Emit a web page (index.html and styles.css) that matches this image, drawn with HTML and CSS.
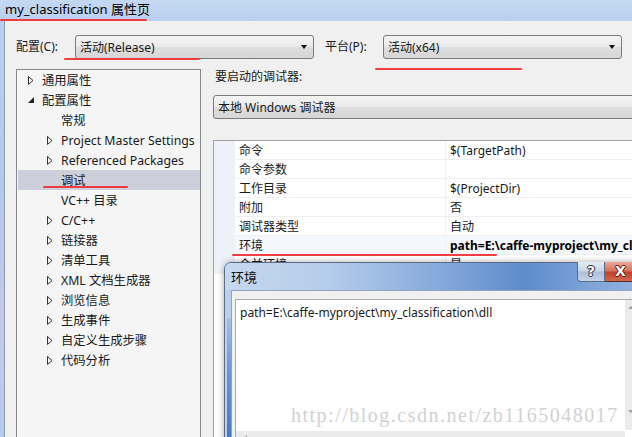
FILE: index.html
```html
<!DOCTYPE html>
<html>
<head>
<meta charset="utf-8">
<link rel="stylesheet" href="styles.css">
</head>
<body>
<div class="titlebar">my_classification 属性页</div>
<div class="bodyrow">
  <div class="side"></div>
  <div class="client">
    <div class="cfgrow">
      <span class="lbl lbl1">配置(C):</span>
      <div class="combo combo-sm"><span>活动(Release)</span><i class="drop"></i></div>
      <span class="lbl lbl2">平台(P):</span>
      <div class="combo combo-sm"><span>活动(x64)</span><i class="drop"></i></div>
    </div>
    <div class="main">
      <div class="tree">
        <div class="row l1"><span class="arr"><svg width="6" height="9" viewBox="0 0 6 9"><path d="M0.5 0.5 L5 4.5 L0.5 8.5 Z" fill="none" stroke="#333" stroke-width="1"/></svg></span>通用属性</div>
        <div class="row l1"><span class="arr"><svg width="6" height="6" viewBox="0 0 6 6"><path d="M6 0 L6 6 L0 6 Z" fill="#222"/></svg></span>配置属性</div>
        <div class="row l2"><span class="arr"></span>常规</div>
        <div class="row l2"><span class="arr"><svg width="6" height="9" viewBox="0 0 6 9"><path d="M0.5 0.5 L5 4.5 L0.5 8.5 Z" fill="none" stroke="#333" stroke-width="1"/></svg></span>Project Master Settings</div>
        <div class="row l2"><span class="arr"><svg width="6" height="9" viewBox="0 0 6 9"><path d="M0.5 0.5 L5 4.5 L0.5 8.5 Z" fill="none" stroke="#333" stroke-width="1"/></svg></span>Referenced Packages</div>
        <div class="row l2 sel"><span class="arr"></span>调试</div>
        <div class="row l2"><span class="arr"></span>VC++ 目录</div>
        <div class="row l2"><span class="arr"><svg width="6" height="9" viewBox="0 0 6 9"><path d="M0.5 0.5 L5 4.5 L0.5 8.5 Z" fill="none" stroke="#333" stroke-width="1"/></svg></span>C/C++</div>
        <div class="row l2"><span class="arr"><svg width="6" height="9" viewBox="0 0 6 9"><path d="M0.5 0.5 L5 4.5 L0.5 8.5 Z" fill="none" stroke="#333" stroke-width="1"/></svg></span>链接器</div>
        <div class="row l2"><span class="arr"><svg width="6" height="9" viewBox="0 0 6 9"><path d="M0.5 0.5 L5 4.5 L0.5 8.5 Z" fill="none" stroke="#333" stroke-width="1"/></svg></span>清单工具</div>
        <div class="row l2"><span class="arr"><svg width="6" height="9" viewBox="0 0 6 9"><path d="M0.5 0.5 L5 4.5 L0.5 8.5 Z" fill="none" stroke="#333" stroke-width="1"/></svg></span>XML 文档生成器</div>
        <div class="row l2"><span class="arr"><svg width="6" height="9" viewBox="0 0 6 9"><path d="M0.5 0.5 L5 4.5 L0.5 8.5 Z" fill="none" stroke="#333" stroke-width="1"/></svg></span>浏览信息</div>
        <div class="row l2"><span class="arr"><svg width="6" height="9" viewBox="0 0 6 9"><path d="M0.5 0.5 L5 4.5 L0.5 8.5 Z" fill="none" stroke="#333" stroke-width="1"/></svg></span>生成事件</div>
        <div class="row l2"><span class="arr"><svg width="6" height="9" viewBox="0 0 6 9"><path d="M0.5 0.5 L5 4.5 L0.5 8.5 Z" fill="none" stroke="#333" stroke-width="1"/></svg></span>自定义生成步骤</div>
        <div class="row l2"><span class="arr"><svg width="6" height="9" viewBox="0 0 6 9"><path d="M0.5 0.5 L5 4.5 L0.5 8.5 Z" fill="none" stroke="#333" stroke-width="1"/></svg></span>代码分析</div>
      </div>
      <div class="right">
        <div class="dbglabel">要启动的调试器:</div>
        <div class="combo combo-wide"><span>本地 Windows 调试器</span></div>
        <div class="grid">
          <div class="prow"><div class="gut"></div><div class="pname">命令</div><div class="pval">$(TargetPath)</div></div>
          <div class="prow"><div class="gut"></div><div class="pname">命令参数</div><div class="pval"></div></div>
          <div class="prow"><div class="gut"></div><div class="pname">工作目录</div><div class="pval">$(ProjectDir)</div></div>
          <div class="prow"><div class="gut"></div><div class="pname">附加</div><div class="pval">否</div></div>
          <div class="prow"><div class="gut"></div><div class="pname">调试器类型</div><div class="pval">自动</div></div>
          <div class="prow hl"><div class="gut"></div><div class="pname">环境</div><div class="pval bold">path=E:\caffe-myproject\my_classification\dll</div></div>
          <div class="prow"><div class="gut"></div><div class="pname">合并环境</div><div class="pval">是</div></div>
        </div>
      </div>
    </div>
  </div>
</div>

<div class="dialog">
  <div class="dtitle">
    <span class="dtext">环境</span>
    <div class="dbtns">
      <div class="btn-help">?</div>
      <div class="btn-close">X</div>
    </div>
  </div>
  <div class="dclient">
    <div class="tarea">
      <div class="tcontent">path=E:\caffe-myproject\my_classification\dll</div>
      <div class="vscroll"><span class="up"></span><span class="down"></span></div>
      <div class="hscroll"><span class="left"></span></div>
    </div>
  </div>
  <div class="dstripe"></div>
</div>

<div class="watermark">http://blog.csdn.net/zb1165048017</div>

<div class="red r1"></div>
<div class="red r2"></div>
<div class="red r3"></div>
<div class="red r4"></div>
<div class="red r5"></div>
</body>
</html>
```

FILE: styles.css
```css
* { box-sizing: border-box; }
html, body { margin: 0; padding: 0; }
body {
  width: 632px;
  height: 437px;
  overflow: hidden;
  background: #f0f0f0;
  font-family: "Noto Sans", "Noto Sans CJK SC", sans-serif;
  font-size: 12px;
  color: #1a1a1a;
  position: relative;
}
.titlebar {
  height: 21px;
  line-height: 19px;
  padding-left: 5px;
  font-size: 13px;
  color: #000;
  background: linear-gradient(180deg, #c4d8f2 0%, #bad0ef 100%);
}
.bodyrow {
  display: flex;
  height: 416px;
  overflow: hidden;
}
.side {
  width: 5px;
  flex-shrink: 0;
  background: linear-gradient(180deg, #b9cfee 0%, #b4c9ea 40%, #c3c8ea 70%, #b6cbec 100%);
  border-right: 1px solid #8e9aad;
}
.client {
  flex: 1;
  padding: 14px 0 0 11px;
  min-width: 0;
}
.cfgrow {
  display: flex;
  align-items: center;
  height: 24px;
}
.lbl { line-height: 24px; white-space: nowrap; }
.lbl1 { width: 59px; }
.lbl2 { width: 58px; margin-left: 11px; }
.combo {
  height: 24px;
  border: 1px solid #7a7a7a;
  border-radius: 3px;
  background: linear-gradient(180deg, #f4f4f4 0%, #ebebeb 48%, #dedede 52%, #d6d6d6 100%);
  display: flex;
  align-items: center;
  padding: 0 5px 0 4px;
  white-space: nowrap;
  flex-shrink: 0;
}
.combo-sm { width: 239px; }
.combo span { flex: 1; }
.drop {
  width: 0; height: 0;
  border-left: 3.5px solid transparent;
  border-right: 3.5px solid transparent;
  border-top: 4px solid #111;
  margin-right: 1px;
}
.main {
  display: flex;
  gap: 12px;
  margin-top: 10px;
}
.tree {
  width: 185px;
  flex-shrink: 0;
  height: 380px;
  border: 1px solid #84888f;
  background: #f5f5f5;
}
.row {
  height: 20px;
  display: flex;
  align-items: center;
  white-space: nowrap;
  font-size: 12.3px;
}
.row.l1 { padding-left: 11px; }
.row.l2 { padding-left: 30px; }
.row.sel { background: #cdcfdb; margin-left: 1px; padding-left: 29px; }
.arr {
  width: 14px;
  flex-shrink: 0;
  display: flex;
  align-items: center;
}
.arr svg { display: block; }
.right {
  width: 440px;
  flex-shrink: 0;
}
.dbglabel {
  line-height: 16px;
  padding-left: 2px;
}
.combo-wide {
  margin-top: 10px;
  width: 440px;
}
.grid {
  margin-top: 21px;
  border: 1px solid #a0a0a0;
  background: #fff;
  height: 300px;
}
.prow {
  display: flex;
  height: 19px;
}
.gut {
  width: 21px;
  flex-shrink: 0;
  background: #eef2f8;
}
.pname {
  width: 211px;
  flex-shrink: 0;
  padding: 2px 0 0 4px;
  line-height: 16px;
  border-bottom: 1px solid #f0f0f0;
  border-right: 1px solid #f0f0f0;
  white-space: nowrap;
}
.pval {
  flex: 1;
  padding: 2px 0 0 4px;
  line-height: 16px;
  border-bottom: 1px solid #f0f0f0;
  white-space: nowrap;
  overflow: hidden;
}
.prow.hl .pname, .prow.hl .pval { background: #f4f7fb; }
.bold { font-weight: bold; color: #000; }

.dialog {
  position: absolute;
  left: 224px;
  top: 262px;
  width: 430px;
  height: 190px;
  border: 1px solid #5b6c86;
  border-radius: 7px 7px 0 0;
  background: linear-gradient(90deg, #bcd0ea 0%, #a9c2e6 30%, #7ea4d8 60%, #8bb0df 100%);
  box-shadow: 0 0 6px rgba(0,0,0,0.35);
}
.dstripe {
  position: absolute;
  left: 2px;
  top: 55px;
  bottom: 0;
  width: 4px;
  background: linear-gradient(180deg, #a7c0e6 0%, #6d95d1 40%, #3f72c0 100%);
}
.dtitle {
  height: 27px;
  position: relative;
  background: linear-gradient(90deg, #c6d8ef 0%, #b4cbea 25%, #85a9db 50%, #5e8bcb 70%, #7da3d8 85%, #9ab8e2 100%);
  border-radius: 6px 6px 0 0;
}
.dtext {
  position: absolute;
  left: 6px;
  top: 4px;
  font-size: 13px;
  color: #111;
}
.dbtns {
  position: absolute;
  left: 352px;
  top: -1px;
  display: flex;
}
.btn-help {
  width: 28px;
  height: 20px;
  border: 1px solid #5a6c88;
  border-top: none;
  border-radius: 0 0 0 4px;
  background: linear-gradient(180deg, #e4ebf5 0%, #c9d6e8 45%, #aebfd8 55%, #c5d3e6 100%);
  color: #fff;
  font-weight: bold;
  font-size: 14px;
  text-align: center;
  line-height: 19px;
  font-family: "DejaVu Sans", sans-serif;
  text-shadow: 0 0 1px #223, 1px 0 0 #334, -1px 0 0 #334, 0 1px 0 #334, 0 -1px 0 #334;
}
.btn-close {
  width: 44px;
  height: 20px;
  border: 1px solid #5a2a22;
  border-top: none;
  border-left: none;
  background: linear-gradient(180deg, #eaa899 0%, #d7725f 45%, #c2412b 55%, #d26a50 100%);
  color: #fff;
  font-weight: bold;
  font-size: 14px;
  line-height: 19px;
  padding-left: 10px;
  font-family: "DejaVu Sans", sans-serif;
  text-shadow: 0 0 1px #411, 1px 0 0 #522, -1px 0 0 #522, 0 1px 0 #522, 0 -1px 0 #522;
}
.dclient {
  margin-left: 6px;
  border: 1px solid #8ea4c2;
  background: #f0f0f0;
  height: 170px;
  padding: 8px 0 0 3px;
}
.tarea {
  position: relative;
  width: 410px;
  height: 160px;
  border: 1px solid #abadb3;
  background: #fff;
}
.tcontent {
  padding: 5px 0 0 4px;
  line-height: 16px;
  white-space: nowrap;
}
.vscroll {
  position: absolute;
  left: 389px;
  top: 0;
  width: 17px;
  height: 130px;
  background: #ebebeb;
}
.vscroll .up {
  position: absolute;
  left: 3px; top: 6px;
  width: 0; height: 0;
  border-left: 3px solid transparent;
  border-right: 3px solid transparent;
  border-bottom: 3px solid #a0a0a0;
}
.vscroll .down {
  position: absolute;
  left: 3px; top: 110px;
  width: 0; height: 0;
  border-left: 3px solid transparent;
  border-right: 3px solid transparent;
  border-top: 3px solid #a0a0a0;
}
.hscroll {
  position: absolute;
  left: 0;
  top: 131px;
  width: 389px;
  height: 17px;
  background: #ebebeb;
}
.hscroll .left {
  position: absolute;
  left: 8px; top: 4px;
  width: 0; height: 0;
  border-top: 3px solid transparent;
  border-bottom: 3px solid transparent;
  border-right: 3px solid #a0a0a0;
}
.watermark {
  position: absolute;
  left: 291px;
  top: 404px;
  font-family: "Liberation Serif", serif;
  font-size: 20px;
  color: #d2d2d2;
  white-space: nowrap;
  letter-spacing: 1.5px;
}
.red {
  position: absolute;
  height: 2px;
  background: #f0333a;
  border-radius: 1px;
  opacity: 0.95;
}
.r1 { left: 0; top: 19px; width: 147px; }
.r2 { left: 64px; top: 58px; width: 136px; }
.r3 { left: 375px; top: 68px; width: 147px; }
.r4 { left: 43px; top: 186px; width: 85px; }
.r5 { left: 232px; top: 254px; width: 265px; }
```
